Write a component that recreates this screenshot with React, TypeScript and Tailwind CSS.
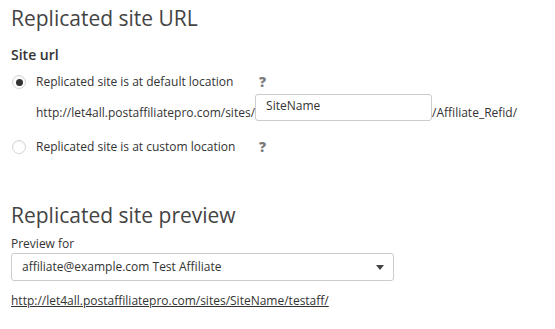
function Radio({ checked }: { checked: boolean }) {
  return (
    <span className="w-[14px] h-[14px] rounded-full border border-[#d5d5d5] bg-white flex items-center justify-center shadow-[inset_0_1px_1px_rgba(0,0,0,0.06)]">
      {checked && <span className="w-[7px] h-[7px] rounded-full bg-[#333]" />}
    </span>
  );
}

function Help() {
  return <span className="text-[14px] font-extrabold text-[#7a7a7a] leading-none">?</span>;
}

export default function App() {
  return (
    <div className="w-[555px] h-[329px] bg-white text-[#333] px-[11px] pt-[2px] font-['Open_Sans',sans-serif]">
      <h1 className="text-[21px] leading-[32px] text-[#444]">Replicated site URL</h1>

      <h2 className="mt-[11px] text-[14px] font-semibold leading-[20px] text-[#333]">Site url</h2>

      <div className="mt-[9px] flex items-center h-[16px] text-[12px]">
        <span className="ml-[1px] w-[24px]"><Radio checked /></span>
        <span className="w-[223px]">Replicated site is at default location</span>
        <Help />
      </div>

      <div className="mt-[4px] ml-[25px] flex items-center text-[12px] h-[27px]">
        <span className="pt-[10px]">http://let4all.postaffiliatepro.com/sites/</span>
        <input
          readOnly
          value="SiteName"
          className="w-[177px] h-[27px] border border-[#ccc] rounded-[3px] px-[10px] pb-[5px] text-[12px] text-[#333] outline-none"
        />
        <span className="pt-[10px]">/Affiliate_Refid/</span>
      </div>

      <div className="mt-[18px] flex items-center h-[16px] text-[12px]">
        <span className="ml-[1px] w-[24px]"><Radio checked={false} /></span>
        <span className="w-[223px]">Replicated site is at custom location</span>
        <Help />
      </div>

      <h1 className="mt-[44px] text-[21px] leading-[32px] text-[#444]">Replicated site preview</h1>

      <div className="mt-[5px] text-[12px] leading-[16px]">Preview for</div>

      <div className="mt-[1px] w-[383px] h-[28px] border border-[#ccc] rounded-[3px] flex items-center justify-between pl-[10px] pr-[9px] text-[12px]">
        <span>affiliate@example.com Test Affiliate</span>
        <svg width="8" height="5" viewBox="0 0 8 5"><path d="M0 0h8L4 5z" fill="#444" /></svg>
      </div>

      <a href="#" className="block mt-[11px] text-[12px] underline text-[#333]">
        http://let4all.postaffiliatepro.com/sites/SiteName/testaff/
      </a>
    </div>
  );
}
